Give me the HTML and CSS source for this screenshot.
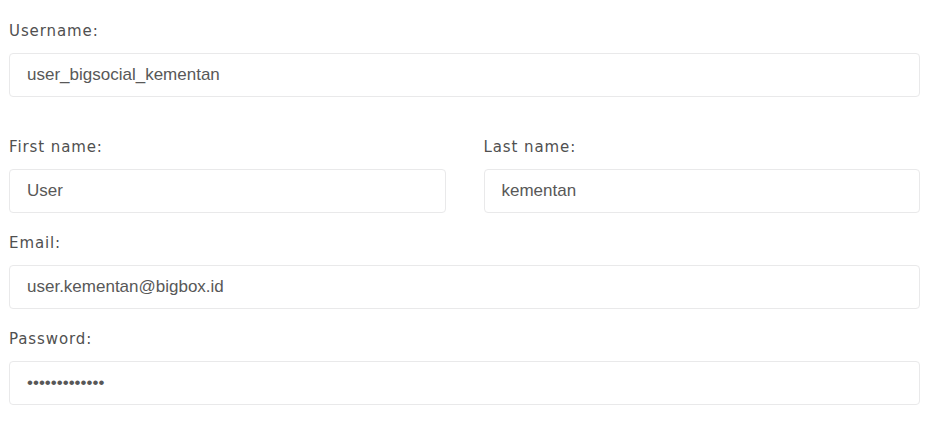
FILE: index.html
```html
<!DOCTYPE html>
<html>
<head>
<meta charset="utf-8">
<link rel="stylesheet" href="styles.css">
</head>
<body>
<form class="form">
  <div class="field field-first">
    <label class="label">Username:</label>
    <input class="input" type="text" value="user_bigsocial_kementan">
  </div>
  <div class="row">
    <div class="field">
      <label class="label">First name:</label>
      <input class="input" type="text" value="User">
    </div>
    <div class="field">
      <label class="label">Last name:</label>
      <input class="input" type="text" value="kementan">
    </div>
  </div>
  <div class="field">
    <label class="label">Email:</label>
    <input class="input" type="text" value="user.kementan@bigbox.id">
  </div>
  <div class="field">
    <label class="label">Password:</label>
    <input class="input" type="password" value="kementan12345">
  </div>
</form>
</body>
</html>
```

FILE: styles.css
```css
* { box-sizing: border-box; }
html, body { margin: 0; padding: 0; background: #fff; }
.form {
  display: flex;
  flex-direction: column;
  gap: 20px;
  padding: 21px 8px 0 9px;
}
.field {
  display: flex;
  flex-direction: column;
  gap: 12px;
}
.field-first { margin-bottom: 20px; }
.row {
  display: grid;
  grid-template-columns: 1fr 1fr;
  column-gap: 38px;
}
.label {
  font-family: "DejaVu Sans", sans-serif;
  font-size: 15px;
  line-height: 20px;
  letter-spacing: 0.9px;
  color: #505050;
}
.input {
  height: 44px;
  width: 100%;
  border: 1px solid #e9e9ea;
  border-radius: 4px;
  padding: 0 17px;
  font-family: "Liberation Sans", Arial, sans-serif;
  font-size: 17px;
  color: #585858;
  background: #fff;
  outline: none;
}
```
